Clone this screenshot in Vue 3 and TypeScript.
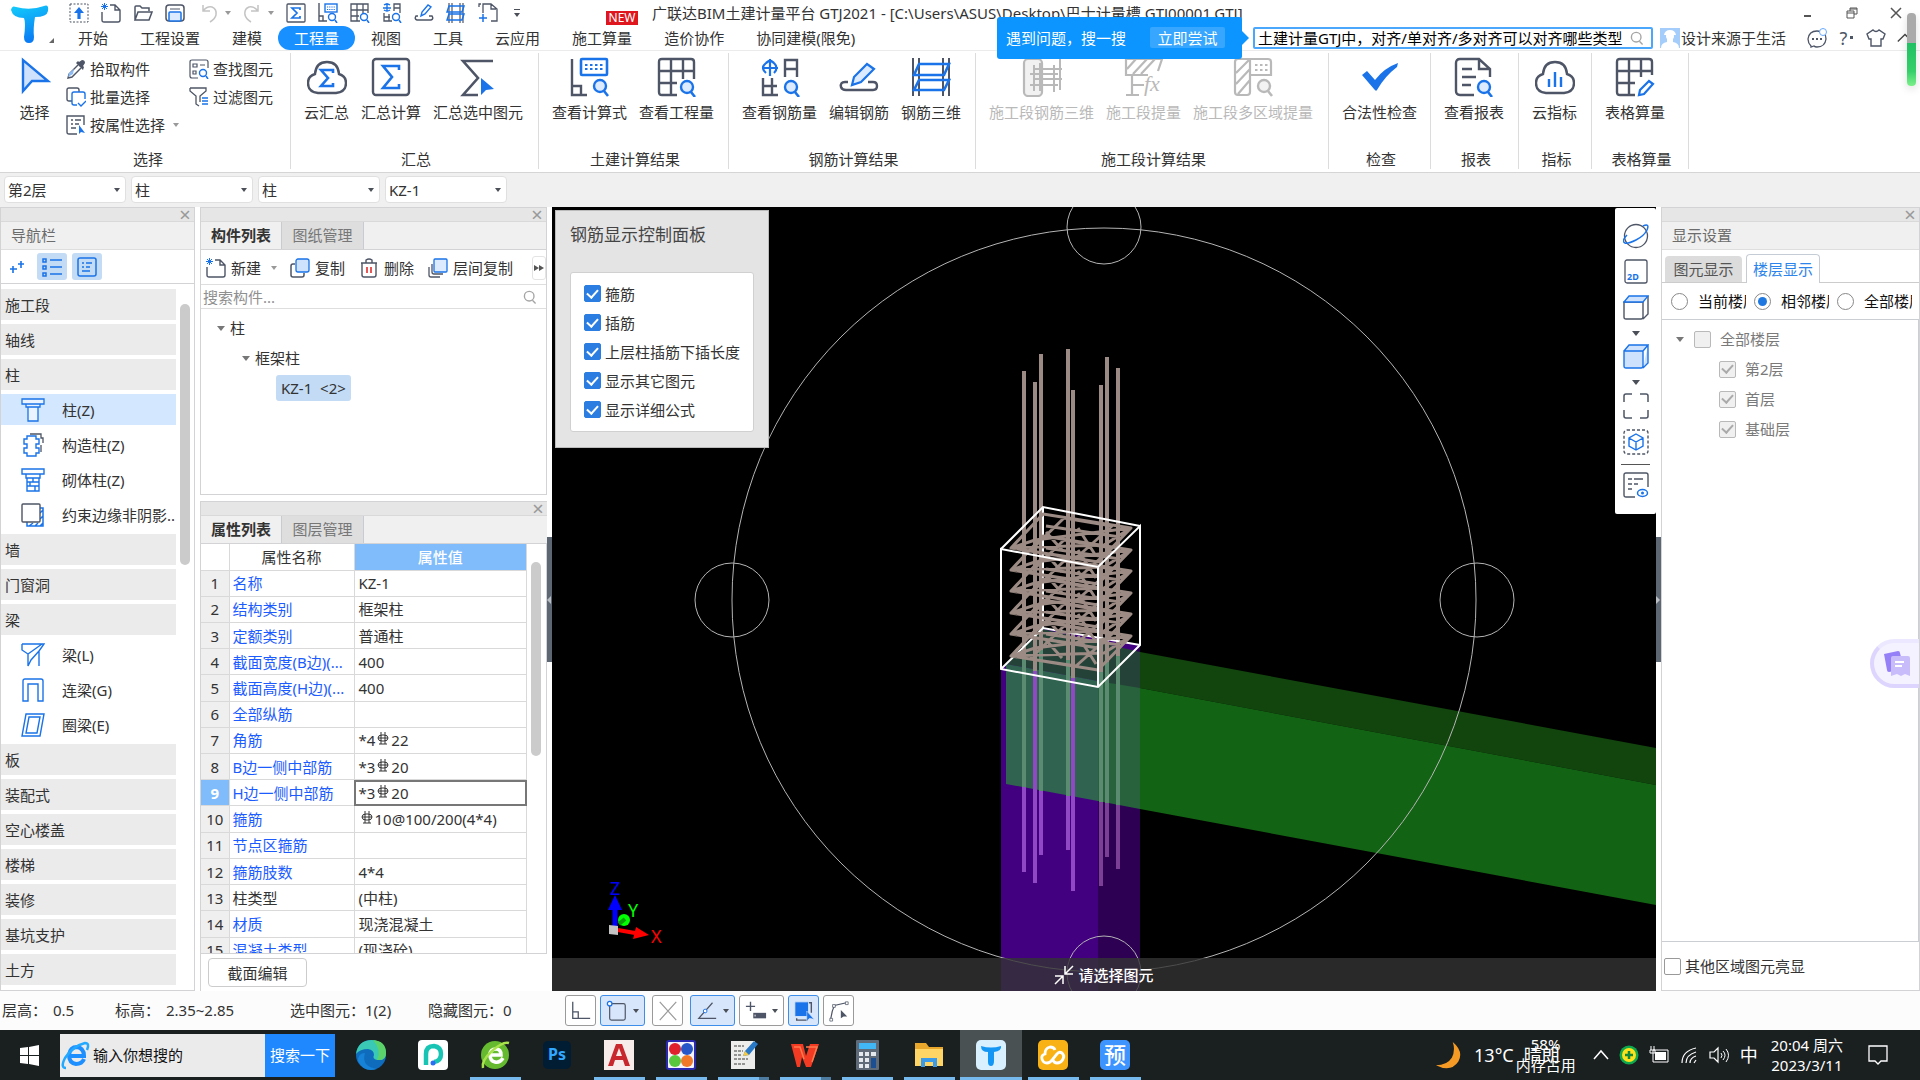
<script setup lang="ts">
import { h, type FunctionalComponent } from 'vue'

const D = '#4d5566'
const B = '#1a73e8'
const G = '#b9b9b9'

const magnifier = (x: number, y: number, c = B, f = '#dcebff') =>
  `<circle cx="${x}" cy="${y}" r="6" fill="${f}" stroke="${c}" stroke-width="2.4"/><path d="M${x + 4} ${y + 5}l4 5" stroke="${c}" stroke-width="2.6"/>`

const art: Record<string, string> = {
  // 20 x 20 glyphs
  upload: `<rect x="1" y="1" width="18" height="18" stroke="${D}" stroke-dasharray="2 1.5"/><path d="M10 4l5 6h-3.400v6H8.400v-6H5z" fill="${B}"/>`,
  newfile: `<path d="M9 2h5l5 5v10q0 2-2 2H3q-2 0-2-2V9M14 2v5h5" stroke="${D}" stroke-width="1.400"/><path d="M1 1l5 5M6 1L1 6M3.500 0v7M0 3.500h7" stroke="${B}"/>`,
  open: `<path d="M2 17V4q0-1 1-1h4l2 2h7v3M2 17L5 9h14l-3 8z" stroke="${D}" stroke-width="1.500"/>`,
  save: `<rect x="1" y="2" width="18" height="16" rx="3" stroke="${D}" stroke-width="1.500"/><path d="M5 6h10" stroke="${D}"/><rect x="4" y="9" width="12" height="9" rx="1" fill="#dcebff" stroke="${B}" stroke-width="1.500"/>`,
  undo: `<path d="M4 2v6h7M4 8q4-5 9-4 5 2 4 8-1 4-6 7" stroke="#c4c4c4" stroke-width="1.500"/>`,
  redo: `<path d="M16 2v6H9M16 8q-4-5-9-4-5 2-4 8 1 4 6 7" stroke="#c4c4c4" stroke-width="1.500"/>`,
  sigmaS: `<rect x="1" y="1" width="18" height="18" rx="1" stroke="${D}" stroke-width="1.300"/><path d="M14 7V5H6l5 5-5 5h8v-2" stroke="${B}" stroke-width="1.700"/>`,
  formulaS: `<path d="M1 0v18h8M1 13h4v5" stroke="${D}" stroke-width="1.400"/><rect x="7" y="1" width="12" height="8" stroke="${B}" stroke-width="1.400"/><path d="M9 4h8M9 6.500h8" stroke="${B}" stroke-dasharray="1.200 1"/><circle cx="14" cy="14" r="3.500" stroke="${B}" stroke-width="1.400"/><path d="M17 17l2 3" stroke="${B}" stroke-width="1.500"/>`,
  gridS: `<path d="M10 18H1V1h17v9M1 7h17M1 13h8M7 1v17M13 1v9" stroke="${D}" stroke-width="1.300"/><circle cx="14" cy="14" r="3.500" stroke="${B}" stroke-width="1.400"/><path d="M17 17l2 3" stroke="${B}" stroke-width="1.500"/>`,
  rebarS: `<path d="M2 10v8h8M2 14h6M12 8V1h6v9M12 5h6M7 11v7" stroke="${D}" stroke-width="1.300"/><path d="M1 5h8M5 0v8M2 2q3-2 6 0M2 7q3 2 6 0" stroke="${B}" stroke-width="1.400"/><circle cx="14" cy="14" r="3.500" stroke="${B}" stroke-width="1.400"/><path d="M17 17l2 3" stroke="${B}" stroke-width="1.500"/>`,
  penS: `<path d="M4 13H2q-2 3 1 4h14q3-1 1-4h-3" stroke="${D}" stroke-width="1.400"/><path d="M7 13l1-4 6-7 3 2-6 7z" stroke="${B}" stroke-width="1.400"/>`,
  ladderS: `<path d="M3 0v20M17 0v20M6 0v20M14 0v20" stroke="${D}" stroke-width="1.200"/><path d="M3 3h15l-2 6H1zM3 11h15l-2 6H1z" stroke="${B}" stroke-width="1.500"/>`,
  addfile: `<path d="M5 10V1h8l6 5v12h-6M1 4V1h2M13 1v5h5" stroke="${D}" stroke-width="1.300"/><path d="M5 11v8M1 15h8" stroke="${B}" stroke-width="1.500"/>`,
  dropper: `<path d="M12 6L3 15l-1 4 4-1 9-9" stroke="${D}" stroke-width="1.400"/><path d="M2 18l1-4 5-4-1 5z" fill="#8dbbf5"/><path d="M10 4l7 7 1-3-1-1 2-3q0-3-3-3l-3 2-1-1z" fill="${D}"/>`,
  batch: `<path d="M6 14H3q-2 0-2-2V3q0-2 2-2h8q2 0 2 2v2" stroke="${D}" stroke-width="1.400"/><path d="M11 18H8q-2 0-2-2V7q0-2 2-2h9q2 0 2 2v5M12 16l3 3 5-5" stroke="${B}" stroke-width="1.400"/>`,
  byprop: `<path d="M11 19H3q-2 0-2-2V1h17v9M5 5h2M9 5h6M5 9h2M9 9h4M5 13h5" stroke="${D}" stroke-width="1.400"/><path d="M13 10v9l2-2 4 1z" fill="${B}"/>`,
  find: `<path d="M9 19H3q-2 0-2-2V3q0-2 2-2h14q2 0 2 2v6M4 5h4v3H4zM11 6h5M4 12h3v3H4z" stroke="${D}" stroke-width="1.200"/><circle cx="14" cy="14" r="3.500" stroke="${B}" stroke-width="1.400"/><path d="M17 17l2 3" stroke="${B}" stroke-width="1.500"/>`,
  filter: `<path d="M1 1h16v3l-6 5v6M1 1v3l6 5v8l3 2" stroke="${D}" stroke-width="1.300"/><path d="M13 11h6M13 14h6M13 17h6" stroke="${B}" stroke-width="1.500"/>`,
  copy: `<path d="M5 6H3q-2 0-2 2v9q0 2 2 2h9q2 0 2-2v-2" stroke="${D}" stroke-width="1.500"/><rect x="6" y="1" width="13" height="13" rx="2" fill="#cfe2fd" stroke="${B}" stroke-width="1.300"/>`,
  trash: `<path d="M2 5h16M7 5V2q3-2 6 0v3M3 5v12q0 2 2 2h10q2 0 2-2V5" stroke="${D}" stroke-width="1.400"/><path d="M8 9v6M12 9v6" stroke="#e02020" stroke-width="1.500"/>`,
  floorcopy: `<path d="M4 6v8q0 2 2 2h9M1 9v8q0 2 2 2h9" stroke="${D}" stroke-width="1.300"/><rect x="6" y="1" width="13" height="13" rx="1" fill="#dcebff" stroke="${B}" stroke-width="1.300"/>`,
  listA: `<path d="M1 2h3v3H1zM1 9h3v3H1zM1 16h3v3H1zM8 3h12M8 10h12M8 17h12" stroke="${B}" stroke-width="1.500"/>`,
  listB: `<rect x="1" y="1" width="18" height="18" rx="2" stroke="${B}" stroke-width="1.500"/><path d="M5 6h2M9 6h6M5 10h2M9 10h4M5 14h8" stroke="${B}" stroke-width="1.400"/>`,
  plus2: `<path d="M6 9v7M3 12h7M14 4v7M11 7h6" stroke="${B}" stroke-width="1.600"/>`,
  // navigation glyphs, 24 x 24
  nCol: `<path d="M1 1h22v5H1zM5 6h14v3H5zM7 9h10v14H7z" fill="#eaf3ff" stroke="${B}" stroke-width="1.300"/>`,
  nStruct: `<path d="M9 1h11v4h2v5M20 12v7" stroke="${D}" stroke-width="1.300"/><path d="M6 3h9v3h3v5h-3v4h3v5h-3v3H6v-3H3v-5h3v-4H3V6h3z" fill="#fff" stroke="${B}" stroke-width="1.400"/>`,
  nBrick: `<path d="M1 1h22v5H1zM5 6h14v4H5zM6 10h12v13H6zM6 14h12M6 18h12M12 10v4M9 14v4M14 18v5" stroke="${B}" stroke-width="1.400"/>`,
  nEdge: `<path d="M19 5h3v18H6v-4M8 23l4-3M14 23l3-3M19 23l3-3M19 16l3-3M19 10l3-3" stroke="${B}" stroke-width="1.500"/><rect x="1" y="1" width="18" height="18" rx="1" fill="#fff" stroke="${D}" stroke-width="1.400"/>`,
  nBeam: `<path d="M1 1h22l-5 7v15M1 1v6l6 4v12l3-6 8-9M7 11L21 1" stroke="${B}" stroke-width="1.400"/>`,
  nLink: `<path d="M2 23V3q0-2 2-2h16q2 0 2 2v20h-5V6H7v17z" stroke="${B}" stroke-width="1.400"/>`,
  nRing: `<path d="M5 1h18l-4 22H1zM8 4h11l-3 16H5z" stroke="${B}" stroke-width="1.400"/>`,
  // view tool glyphs, 26 x 26
  orbit: `<circle cx="13" cy="13" r="11.500" stroke="${D}" stroke-width="1.300"/><path d="M20 3q7-3 4 4-3 6-11 10-8 4-11 3-4-2 2-8" stroke="${B}" stroke-width="1.500"/>`,
  twod: `<rect x="2" y="1" width="22" height="23" rx="2" stroke="${D}" stroke-width="1.300"/><text x="4" y="21" font-size="9" font-weight="700" font-family="Noto Sans, sans-serif" fill="${B}">2D</text>`,
  cube: `<path d="M1 7h19v15q0 2-2 2H3q-2 0-2-2zM20 24l5-5V1" stroke="${D}" stroke-width="1.400"/><path d="M1 7l5-6h19l-5 6z" fill="#cfe2fd" stroke="${B}" stroke-width="1.300"/>`,
  cubeBlue: `<path d="M1 7h19v15q0 2-2 2H3q-2 0-2-2zM1 7l5-6h19l-5 6M20 24l5-5V1" fill="#cfe2fd" stroke="${B}" stroke-width="1.400"/>`,
  corners: `<path d="M1 9V3q0-2 2-2h6M17 1h6q2 0 2 2v6M25 17v6q0 2-2 2h-6M9 25H3q-2 0-2-2v-6" stroke="${D}" stroke-width="1.500"/>`,
  dashcube: `<rect x="1" y="1" width="24" height="24" rx="3" stroke="${D}" stroke-width="1.400" stroke-dasharray="3 2"/><path d="M13 5l7 4v8l-7 4-7-4V9zM6 9l7 4 7-4M13 13v8" stroke="${B}" stroke-width="1.400"/>`,
  listeye: `<path d="M12 25H3q-2 0-2-2V3q0-2 2-2h20q2 0 2 2v12M5 7h4M11 7h9M5 12h4M11 12h4M5 17h4" stroke="${D}" stroke-width="1.400"/><ellipse cx="19.500" cy="21" rx="5" ry="3.500" stroke="${B}" stroke-width="1.500"/><circle cx="19.500" cy="21" r="1.500" fill="${B}"/>`,
  // ribbon glyphs, 40 x 40
  arrow: `<path d="M8 3v31l9-10h16z" fill="#cfe2fd" stroke="${B}" stroke-width="2.400"/>`,
  cloudSum: `<path d="M11 36q-10-1-10-10 0-7 7-9 1-12 12-12t12 12q7 2 7 9 0 9-10 10z" stroke="${D}" stroke-width="2.400"/><path d="M26 16v-3H14l7 8-7 8h12v-3" stroke="${B}" stroke-width="2.600"/>`,
  sum: `<rect x="2" y="2" width="36" height="36" rx="3" stroke="${D}" stroke-width="2.400"/><path d="M28 13V9H12l9 11-9 11h16v-4" stroke="${B}" stroke-width="2.600"/>`,
  sumSel: `<path d="M35 4H5l15 17L5 38h15" stroke="${D}" stroke-width="2.600"/><path d="M23 21v17l5-5 8-1z" fill="${B}"/>`,
  formula: `<path d="M2 2v36h15M2 29h9v9" stroke="${D}" stroke-width="2.400"/><rect x="11" y="2" width="26" height="16" rx="1" stroke="${B}" stroke-width="2.600"/><path d="M15 8h19M15 12h19" stroke="${B}" stroke-width="2" stroke-dasharray="2.500 2.500"/>${magnifier(30, 29)}`,
  grid: `<path d="M20 38H5q-3 0-3-3V5q0-3 3-3h29q3 0 3 3v17M2 14h35M2 26h18M14 2v36M26 2v20" stroke="${D}" stroke-width="2.400"/>${magnifier(30, 30)}`,
  rebar: `<path d="M3 21v17h15M3 29h14M12 21v17M25 20V3h12v17M25 12h12" stroke="${D}" stroke-width="2.400"/><path d="M2 11h16M10 2v17M6 6q-6 5 0 10M14 6q5 5 0 10M6 6l4-3 4 3" stroke="${B}" stroke-width="2.200"/>${magnifier(31, 30)}`,
  pen: `<path d="M9 25H6q-5 0-4 5 1 3 5 3h27q4 0 4-4 0-4-4-4h-5" stroke="${D}" stroke-width="2.400"/><path d="M13 28l2-8L28 7l7 5-13 13z" fill="#dcebff" stroke="${B}" stroke-width="2.200"/>`,
  ladder: `<path d="M2 1v38M8 1v38M32 1v38M38 1v38" stroke="${D}" stroke-width="2"/><path d="M8 7h30l-5 11H3zM8 23h30l-5 10H3z" stroke="${B}" stroke-width="2.600"/>`,
  segLadder: `<rect x="2" y="2" width="18" height="37" rx="4" fill="#f1f1f1" stroke="${G}" stroke-width="2.200"/><path d="M12 8v26M18 6v28M38 1v32M32 8v27M12 12h28M8 17h28M12 22h28M8 28h28" stroke="${G}" stroke-width="2"/>`,
  segFx: `<path d="M2 2h36l-4 12M2 2v16h22M3 12L12 2M9 17L23 2M17 17L31 2M8 18v20M8 28h12M2 38h13" stroke="${G}" stroke-width="2.200"/><text x="20" y="34" font-size="22" font-style="italic" font-family="Liberation Serif, serif" fill="${G}">fx</text>`,
  segGrid: `<path d="M17 2v33q0 3-3 3H5q-3 0-3-3V5q0-3 3-3h30q3 0 3 3v13H17M3 16L16 3M3 27L17 12M5 37L17 23" stroke="${G}" stroke-width="2.200"/><path d="M22 8h14M22 13h14" stroke="${G}" stroke-width="2" stroke-dasharray="2.500 2.500"/>${magnifier(31, 29, G, '#f3f3f3')}`,
  check: `<path d="M2 18l5-4 8 9Q24 11 38 6l-1 4Q25 19 17 33q-1 2-3-1z" fill="${B}"/>`,
  report: `<path d="M20 38H6q-4 0-4-4V6q0-4 4-4h19l11 10v8M25 2v10h11M8 12h10M8 20h14M8 28h9" stroke="${D}" stroke-width="2.400"/>${magnifier(30, 30)}`,
  cloudBar: `<path d="M11 36q-10-1-10-10 0-7 7-9 1-12 12-12t12 12q7 2 7 9 0 9-10 10z" stroke="${D}" stroke-width="2.400"/><path d="M14 22v8M20 15v15M26 20v10" stroke="${B}" stroke-width="2.400"/>`,
  gridPen: `<path d="M20 38H5q-3 0-3-3V5q0-3 3-3h29q3 0 3 3v13M2 14h35M2 26h18M14 2v36M26 2v18" stroke="${D}" stroke-width="2.400"/><path d="M24 38l1-5 9-9 4 3-9 10z" stroke="${B}" stroke-width="2.200"/>`,
  // header extras
  chat: `<path d="M4 18q-3-3-3-7 1-8 9-8 9 0 9 8-1 8-9 8-2 0-3-1l-3 1z" stroke="${D}" stroke-width="1.300"/><path d="M5 11h2M9 11h2M13 11h2" stroke="${D}" stroke-width="1.800"/><circle cx="16" cy="4" r="3.500" fill="#fff" stroke="#68a8ff"/>`,
  shirt: `<path d="M7 2q3 3 6 0l6 4-2 5h-2v7H5v-7H3L1 6z" stroke="${D}" stroke-width="1.400"/>`,
  up: `<path d="M2 14l8-8 8 8" stroke="#444" stroke-width="1.500"/>`,
  avatar: `<path d="M0 0h20v20H0z" fill="#a4cdfc"/><path d="M1 20q0-5 6-6V9h6v5q6 1 6 6z" fill="#fff"/><circle cx="10" cy="8" r="4" fill="#fff"/><path d="M4 7q1-5 6-5t6 5z" fill="#fff"/>`,
  lens: `<circle cx="9" cy="9" r="6" stroke="#a5a5a5" stroke-width="1.700"/><path d="M13 14l4 4" stroke="#a5a5a5" stroke-width="1.700"/>`,
  // status bar, 24 x 24
  sPerp: `<path d="M3 2v18h19M3 13h6v7" stroke="${D}" stroke-width="1.400"/>`,
  sRect: `<rect x="4" y="4" width="17" height="18" rx="2" stroke="${D}" stroke-width="1.300"/><circle cx="4" cy="4" r="2.500" fill="#fff" stroke="${B}" stroke-width="1.400"/>`,
  sX: `<path d="M3 2l18 20M21 2L3 22" stroke="#9a9a9a" stroke-width="1.300"/>`,
  sAngle: `<path d="M18 3L3 20h19" stroke="${D}" stroke-width="1.300"/><circle cx="10" cy="12" r="2" fill="#fff" stroke="${B}"/>`,
  sInput: `<path d="M6 2v10M1 7h10" stroke="${D}" stroke-width="1.500"/><path d="M9 14h14v6H9z" fill="${D}"/><path d="M11 16v2" stroke="#fff"/>`,
  sFill: `<path d="M6 22h10M20 14V3h-3M4 20v2h2" stroke="${D}" stroke-width="1.500"/><rect x="2" y="2" width="15" height="16" rx="1" fill="${B}" stroke="#d7e6fb"/><path d="M15 12v11l3-3 5 1z" fill="${B}" stroke="#d7e6fb" stroke-width=".6"/>`,
  sPoly: `<path d="M3 21Q4 12 7 6l13-3" stroke="${D}" stroke-width="1.300"/><path d="M2 20h3v3H2zM5 5h3v3H5zM19 2h3v3h-3z" fill="#fff" stroke="${D}" stroke-width=".8"/><path d="M14 11v9l3-2 4 0z" fill="${D}"/>`,
  // taskbar, 32 x 32
  win: `<path d="M6 9l8-1v8H6zM15 8l10-2v10H15zM6 17h8v8l-8-1zM15 17h10v10l-10-2z" fill="#fff"/>`,
  ie: `<path d="M24 20q-2 5-8 5-7-1-7-9 1-8 8-8 7 1 7 9H10" stroke="#1e8fff" stroke-width="4"/><path d="M6 29Q0 29 5 19 13 7 25 4q5 0 2 7" stroke="#23a9ff" stroke-width="2.500"/>`,
  edge: `<circle cx="16" cy="16" r="15" fill="#0f6cbd"/><path d="M1 15Q3 1 17 1q13 1 14 13 0 8-9 7-5-1-3-5 0-5-6-6-8 0-12 5z" fill="#39c9b4"/><path d="M18 1q13 1 13 13 0 8-9 7 5-10-4-20z" fill="#5bd36a"/><path d="M10 14q-4 14 12 16-13 4-19-8 0-8 7-8z" fill="#1683d8"/>`,
  pico: `<rect x="1" y="1" width="30" height="30" rx="4" fill="#fff"/><path d="M9 26V15q0-8 8-8 7 1 7 8 0 7-7 8" stroke="#18c5b5" stroke-width="4.500"/><circle cx="16" cy="24" r="2.500" fill="#2d6df6"/>`,
  egreen: `<circle cx="16" cy="16" r="14" fill="#65ba2f"/><path d="M24 19q-3 5-8 4-5-1-5-7 0-6 6-6 5 0 5 6H11" stroke="#fff" stroke-width="3.500"/><path d="M4 29Q2 22 13 12 24 2 30 4" stroke="#a9e34b" stroke-width="2.500"/>`,
  ps: `<rect x="2" y="2" width="28" height="28" rx="5" fill="#001d34"/><text x="7" y="21" font-size="16" font-weight="700" font-family="Noto Sans, sans-serif" fill="#31a8ff">Ps</text>`,
  acad: `<path d="M1 1h30v30H1z" fill="#f7ece9"/><path d="M5 27L13 5h6l8 22h-5l-2-6h-8l-2 6zM13 17h6l-3-8z" fill="#c8282d"/>`,
  balls: `<rect x="2" y="2" width="28" height="28" rx="2" fill="#f4f4ff" stroke="#2a2ab0" stroke-width="2"/><circle cx="10" cy="10" r="6" fill="#e0202c"/><circle cx="22" cy="10" r="6" fill="#2656c8"/><circle cx="10" cy="22" r="6" fill="#5ac83c"/><circle cx="22" cy="22" r="6" fill="#f07828"/>`,
  note: `<path d="M4 2h24v28H4z" fill="#ededeb"/><path d="M7 7h10M7 12h9M7 16h8M7 20h14M7 25h11" stroke="#777" stroke-width="1.500" stroke-dasharray="3 1"/><path d="M16 17l2-5L27 2l4 3-9 11z" fill="#2878c8"/><path d="M16 17l2-5 4 4z" fill="#f6c945"/>`,
  wps: `<path d="M2 5h12l3 12 4-12h9l-8 23h-5l-4-10-2 10H8z" fill="#f23b22"/><path d="M5 8h6l4 12M17 8h11l-5 15" stroke="#ff7a4d" stroke-width="1.500"/>`,
  calc: `<rect x="5" y="1" width="23" height="30" rx="1" fill="#5f6b78"/><path d="M8 4h17v6H8z" fill="#42b7f5"/><path d="M8 13h4v4H8zM14 13h4v4h-4zM20 13h5v4h-5zM8 19h4v4H8zM14 19h4v4h-4zM8 25h4v4H8zM14 25h4v4h-4z" fill="#e4e9ee"/><path d="M20 19h5v10h-5z" fill="#1b4f91"/>`,
  folder: `<path d="M2 4h11l3 4h14v19H2z" fill="#e9a72c"/><path d="M2 10h28v17H2z" fill="#ffd665"/><path d="M8 28v-9h16v9h-4v-5h-8v5z" fill="#3b9be8"/>`,
  glodon: `<rect x="1" y="1" width="30" height="30" rx="5" fill="#d9f0ff"/><path d="M6 7q10 3 20 0 1 5-7 6v9q0 5-3 5t-3-4V13q-7 0-7-6z" fill="#1496f5"/>`,
  cloudY: `<rect x="1" y="1" width="30" height="30" rx="5" fill="#f9b215"/><path d="M18 11q-1-3-5-3-5 1-5 7-4 1-3 5 1 4 5 4 3 0 5-3l5-6q2-3 5-1 3 3 1 6-2 4-6 4-3 0-4-3" stroke="#fff" stroke-width="2.800"/>`,
  yu: `<rect x="1" y="1" width="30" height="30" rx="5" fill="#3d94ff"/><text x="5" y="24" font-size="22" font-weight="500" font-family="Noto Sans CJK SC, sans-serif" fill="#fff">预</text>`,
  moon: `<path d="M20 2q12 10 6 21-8 12-24 4 12 0 17-8 4-8 1-17z" fill="#f59b25"/>`,
  safe: `<circle cx="10" cy="10" r="9.500" fill="#10a84c"/><circle cx="10" cy="10" r="7" fill="#ffe11b"/><path d="M10 6v8M6 10h8" stroke="#10893e" stroke-width="2.500"/>`,
  battery: `<path d="M6 7h11v8H6z" fill="#fff"/><path d="M4 5h15v12H4zM2 1v4M5 1v4M1 5h5v3H1z" stroke="#fff"/>`,
  wifi: `<path d="M3 18Q3 6 17 3M7 18q0-8 10-11M11 18q0-5 6-7M15 18l2-3" stroke="#fff" stroke-width="1.200"/>`,
  volume: `<path d="M1 7h4l4-4v14l-4-4H1z" stroke="#fff" stroke-width="1.200"/><path d="M12 8q2 2 0 5M14 6q4 4 0 9M17 4q5 6 0 13" stroke="#fff"/>`,
  bell: `<path d="M1 1h18v15h-6l-3 3-3-3H1z" stroke="#fff" stroke-width="1.300"/>`,
  converge: `<path d="M11 1v8h8M19 1l-8 8M9 19v-8H1M1 19l8-8" stroke="#fff" stroke-width="1.500"/>`,
}

const Ico: FunctionalComponent<{ name: string; box?: number; size?: number }> = (p) =>
  h('svg', {
    class: 'ico',
    viewBox: `0 0 ${p.box ?? 20} ${p.box ?? 20}`,
    width: p.size ?? p.box ?? 20,
    height: p.size ?? p.box ?? 20,
    fill: 'none',
    'aria-hidden': 'true',
    innerHTML: art[p.name],
  })
Ico.props = ['name', 'box', 'size']

const quickA = ['upload', 'newfile', 'open', 'save']
const quickB = ['sigmaS', 'formulaS', 'gridS', 'rebarS', 'penS', 'ladderS', 'addfile']
const menus = ['开始', '工程设置', '建模', '工程量', '视图', '工具', '云应用', '施工算量', '造价协作', '协同建模(限免)']

interface Group { title: string; width: number; off?: boolean; items: [string, string][] }
const groups: Group[] = [
  { title: '汇总', width: 248, items: [['cloudSum', '云汇总'], ['sum', '汇总计算'], ['sumSel', '汇总选中图元']] },
  { title: '土建计算结果', width: 190, items: [['formula', '查看计算式'], ['grid', '查看工程量']] },
  { title: '钢筋计算结果', width: 247, items: [['rebar', '查看钢筋量'], ['pen', '编辑钢筋'], ['ladder', '钢筋三维']] },
  { title: '施工段计算结果', width: 353, off: true, items: [['segLadder', '施工段钢筋三维'], ['segFx', '施工段提量'], ['segGrid', '施工段多区域提量']] },
  { title: '检查', width: 102, items: [['check', '合法性检查']] },
  { title: '报表', width: 88, items: [['report', '查看报表']] },
  { title: '指标', width: 73, items: [['cloudBar', '云指标']] },
  { title: '表格算量', width: 97, items: [['gridPen', '表格算量']] },
]
const combos = [['楼层', '第2层'], ['构件大类', '柱'], ['构件类型', '柱'], ['构件', 'KZ-1']]

interface NavItem { text: string; icon?: string; on?: boolean }
const nav: NavItem[] = [
  { text: '施工段' }, { text: '轴线' }, { text: '柱' },
  { text: '柱(Z)', icon: 'nCol', on: true }, { text: '构造柱(Z)', icon: 'nStruct' },
  { text: '砌体柱(Z)', icon: 'nBrick' }, { text: '约束边缘非阴影..', icon: 'nEdge' },
  { text: '墙' }, { text: '门窗洞' }, { text: '梁' },
  { text: '梁(L)', icon: 'nBeam' }, { text: '连梁(G)', icon: 'nLink' }, { text: '圈梁(E)', icon: 'nRing' },
  { text: '板' }, { text: '装配式' }, { text: '空心楼盖' }, { text: '楼梯' },
  { text: '装修' }, { text: '基坑支护' }, { text: '土方' },
]

// name, text before the bar-grade mark, text after it (null: no mark)
const props: [string, string, string | null][] = [
  ['名称', 'KZ-1', null], ['结构类别', '框架柱', null], ['定额类别', '普通柱', null],
  ['截面宽度(B边)(...', '400', null], ['截面高度(H边)(...', '400', null], ['全部纵筋', '', null],
  ['角筋', '*4', '22'], ['B边一侧中部筋', '*3', '20'], ['H边一侧中部筋', '*3', '20'],
  ['箍筋', '', '10@100/200(4*4)'], ['节点区箍筋', '', null], ['箍筋肢数', '4*4', null],
  ['柱类型', '(中柱)', null], ['材质', '现浇混凝土', null], ['混凝土类型', '(现浇砼)', null],
]

const showOptions = ['箍筋', '插筋', '上层柱插筋下插长度', '显示其它图元', '显示详细公式']
const floors = ['第2层', '首层', '基础层']

// vertical bars: x, top, end inside the column, bottom end, front row
const bars = [
  [1024, 371, 655, 872, 0], [1035, 382, 671, 883, 1], [1041, 354, 650, 855, 0], [1068, 349, 660, 850, 0],
  [1073, 390, 678, 891, 1], [1101, 385, 672, 886, 0], [1107, 357, 662, 857, 0], [1118, 368, 656, 869, 0],
]
const ties = [0, 1, 2, 3, 4, 5].map((i) => {
  const y = 548 + Math.round(i * 21.5)
  return [
    `M1011 ${y}L1043 ${y - 34}L1131 ${y - 20}L1098 ${y + 14}Z`,
    `M1011 ${y}L1035 ${y - 8}L1131 ${y - 20}L1104 ${y - 3}Z`,
    `M1030 ${y + 3}L1064 ${y - 30}L1112 ${y - 22}L1076 ${y + 10}Z`,
    `M1046 ${y - 22}L1120 ${y - 11}M1046 ${y - 16}L1062 ${y + 2}M1078 ${y - 20}L1096 ${y + 8}`,
  ].join('')
})
const rings = [[732, 600], [1477, 600], [1104, 227], [1104, 973]]

const statusTools = [
  { icon: 'sPerp' }, { icon: 'sRect', on: true, more: true }, { icon: 'sX', apart: true },
  { icon: 'sAngle', on: true, more: true, apart: true }, { icon: 'sInput', more: true },
  { icon: 'sFill', on: true }, { icon: 'sPoly' },
]
const apps = [
  { icon: 'edge', name: 'Edge' }, { icon: 'pico', name: 'P' }, { icon: 'egreen', name: '360', run: true },
  { icon: 'ps', name: 'Photoshop' }, { icon: 'acad', name: 'AutoCAD', run: true }, { icon: 'balls', name: 'Media', run: true },
  { icon: 'note', name: 'Notes', run: true, stack: true }, { icon: 'wps', name: 'WPS', run: true, stack: true },
  { icon: 'calc', name: 'Calculator', run: true }, { icon: 'folder', name: 'Explorer', run: true },
  { icon: 'glodon', name: 'GTJ', run: true, cur: true }, { icon: 'cloudY', name: 'Cloud', run: true }, { icon: 'yu', name: 'Budget', run: true },
]
</script>

<template>
  <div class="app">
    <header class="head">
      <button class="logo" aria-label="应用菜单">
        <svg viewBox="0 0 40 40" width="40" height="40" aria-hidden="true">
          <defs><linearGradient id="lg" x1="0" y1="0" x2="0.300" y2="1"><stop offset="0" stop-color="#13cdfb" /><stop offset="1" stop-color="#0a7cf4" /></linearGradient></defs>
          <path d="M1 6q1-5 5-3 14 4 28-1 5-2 4 5-1 6-13 6-2 12-1 20 0 6-5 6t-5-6q2-14 0-19-11 0-13-8z" fill="url(#lg)" />
        </svg>
        <i class="corner"></i>
      </button>
      <div class="headmain">
        <div class="row1">
          <div class="quick"><button v-for="q in quickA" :key="q" :aria-label="q"><Ico :name="q" /></button></div>
          <div class="hist">
            <button aria-label="撤销"><Ico name="undo" /></button><i class="caret pale"></i>
            <button class="redo" aria-label="恢复"><Ico name="redo" /></button><i class="caret pale"></i>
          </div>
          <div class="quick"><button v-for="q in quickB" :key="q" :aria-label="q"><Ico :name="q" /></button></div>
          <button class="more" aria-label="自定义"><i class="bar"></i><i class="caret"></i></button>
          <span class="new">NEW</span>
          <span class="title">广联达BIM土建计量平台 GTJ2021 - [C:\Users\ASUS\Desktop\巴士计量槽.GTJ00001.GTJ]</span>
          <div class="wins">
            <button aria-label="最小化"><svg width="12" height="12" fill="none"><path d="M2 9h7" stroke="#555" stroke-width="2" /></svg></button>
            <button aria-label="还原"><svg width="12" height="12" fill="none"><path d="M1 4h7v7H1zM4 4V1h7v6H8M1 6h7M4 2h7" stroke="#555" /></svg></button>
            <button aria-label="关闭"><svg width="12" height="12" fill="none"><path d="M1 1l10 10M11 1L1 11" stroke="#555" stroke-width="1.500" /></svg></button>
          </div>
        </div>
        <div class="row2">
          <nav class="menus"><button v-for="m in menus" :key="m" :class="{ on: m === '工程量' }">{{ m }}</button></nav>
          <div class="user">
            <div class="search">
              <input type="text" aria-label="搜索" value="土建计量GTJ中，对齐/单对齐/多对齐可以对齐哪些类型" />
              <Ico name="lens" :size="16" />
              <div class="tip"><span>遇到问题，搜一搜</span><button>立即尝试</button></div>
            </div>
            <Ico name="avatar" />
            <span>设计来源于生活</span>
            <div class="extras">
              <button aria-label="消息"><Ico name="chat" /></button>
              <button class="help" aria-label="帮助">?<i class="dot"></i></button>
              <button aria-label="皮肤"><Ico name="shirt" /></button>
              <button aria-label="收起"><Ico name="up" :size="18" /></button>
            </div>
          </div>
        </div>
      </div>
      <div class="gauge"></div>
    </header>

    <section class="ribbon">
      <div class="group pick">
        <div class="tools">
          <button class="big sel"><Ico name="arrow" :box="40" /><span>选择</span></button>
          <div class="smalls">
            <button><Ico name="dropper" />拾取构件</button>
            <button><Ico name="batch" />批量选择</button>
            <button><Ico name="byprop" />按属性选择<i class="caret pale"></i></button>
          </div>
          <div class="smalls">
            <button><Ico name="find" />查找图元</button>
            <button><Ico name="filter" />过滤图元</button>
          </div>
        </div>
        <div class="gtitle">选择</div>
      </div>
      <div v-for="g in groups" :key="g.title" class="group" :class="{ off: g.off }" :style="{ width: g.width + 'px' }">
        <div class="tools">
          <button v-for="it in g.items" :key="it[1]" class="big" :disabled="g.off"><Ico :name="it[0]" :box="40" /><span>{{ it[1] }}</span></button>
        </div>
        <div class="gtitle">{{ g.title }}</div>
      </div>
    </section>

    <section class="combos">
      <div v-for="c in combos" :key="c[0]" class="combo">
        <select :aria-label="c[0]"><option>{{ c[1] }}</option></select><i class="caret"></i>
      </div>
    </section>

    <main class="work">
      <aside class="panel navp">
        <div class="strip"><button aria-label="关闭">×</button></div>
        <h2 class="ptitle">导航栏</h2>
        <div class="navtools">
          <button aria-label="添加"><Ico name="plus2" /></button>
          <button class="on" aria-label="列表"><Ico name="listA" /></button>
          <button class="on" aria-label="详情"><Ico name="listB" /></button>
        </div>
        <div class="navbody">
          <ul>
            <li v-for="n in nav" :key="n.text" :class="{ leaf: n.icon, on: n.on }"><Ico v-if="n.icon" :name="n.icon" :box="24" />{{ n.text }}</li>
          </ul>
          <div class="track"><i class="thumb navthumb"></i></div>
        </div>
      </aside>

      <div class="mid">
        <section class="panel comp">
          <div class="strip"><button aria-label="关闭">×</button></div>
          <div class="tabs"><button class="on">构件列表</button><button>图纸管理</button></div>
          <div class="ctools">
            <button class="c1"><Ico name="newfile" />新建<i class="caret pale"></i></button>
            <button class="c2"><Ico name="copy" />复制</button>
            <button class="c3"><Ico name="trash" />删除</button>
            <button class="c4"><Ico name="floorcopy" />层间复制</button>
            <button class="next" aria-label="更多"><i></i><i></i></button>
          </div>
          <div class="find"><input type="text" aria-label="搜索构件" placeholder="搜索构件..." /><Ico name="lens" :size="16" /></div>
          <div class="tree">
            <div class="t1"><i class="caret"></i>柱</div>
            <div class="t2"><i class="caret"></i>框架柱</div>
            <div class="t3"><span>KZ-1 &nbsp;&lt;2&gt;</span></div>
          </div>
        </section>
        <section class="panel attr">
          <div class="strip"><button aria-label="关闭">×</button></div>
          <div class="tabs"><button class="on">属性列表</button><button>图层管理</button></div>
          <div class="sheet">
            <table>
              <thead><tr><th class="no"></th><th class="nm">属性名称</th><th class="vl">属性值</th></tr></thead>
              <tbody>
                <tr v-for="(p, i) in props" :key="p[0]" :class="{ cur: i === 8, plain: i === 12 }">
                  <th scope="row">{{ i + 1 }}</th>
                  <td class="name">{{ p[0] }}</td>
                  <td class="val">{{ p[1] }}<svg v-if="p[2]" class="grade" width="12" height="14" viewBox="0 0 12 14" fill="none" aria-label="Φ"><path d="M1 6q0-3 4-3h2q4 0 4 3t-4 3H5Q1 9 1 6zM4 0v12M8 0v12M1 6h10M2 12h8" stroke="#333" /></svg>{{ p[2] }}</td>
                </tr>
              </tbody>
            </table>
            <div class="track"><i class="thumb attrthumb"></i></div>
          </div>
          <div class="foot"><button>截面编辑</button></div>
        </section>
      </div>

      <div class="split"><i class="grip left"></i></div>

      <section class="view">
        <svg class="scene" viewBox="552 207 1104 784" preserveAspectRatio="xMidYMid slice" role="img" aria-label="三维视图">
          <path d="M1001 669L1043 628L1140 645V1000H1001z" fill="#420080" />
          <path d="M1098 687L1140 645V1000H1098z" fill="#2d0054" />
          <path d="M1140 652L1656 748V785L1140 688z" fill="#12440d" />
          <path d="M1140 688L1656 785V905L1140 809z" fill="#136314" />
          <path d="M1006 664L1043 629L1140 652V689z" fill="#254238" />
          <path d="M1006 664L1098 681V801L1006 784z" fill="#306350" />
          <path d="M1098 681L1140 688V809L1098 801z" fill="#28623c" />
          <g stroke-width="4">
            <g v-for="b in bars" :key="b[0]">
              <path :d="`M${b[0]} ${b[2]}V${b[3]}`" :stroke="b[0] > 1098 ? '#7b3f95' : '#9148c4'" />
              <path v-if="!b[4]" :d="`M${b[0]} ${b[2]}V${784 + Math.round((b[0] - 1006) * 0.186)}`" stroke="#5b8b70" />
              <path :d="`M${b[0]} ${b[1]}V${b[2]}`" stroke="#9c8b84" />
            </g>
          </g>
          <path d="M1001 549L1043 507L1140 526M1043 507V628M1001 669L1043 628L1140 645" fill="none" stroke="#fff" stroke-width="2" />
          <path v-for="t in ties" :key="t" :d="t" fill="none" stroke="#9c8b84" stroke-width="3" stroke-linejoin="round" />
          <path d="M1001 549L1098 567L1140 526V645L1098 687L1001 669zM1098 567V687" fill="none" stroke="#fff" stroke-width="2" />
          <g fill="none" stroke="#b4b4b4" stroke-width="1">
            <circle cx="1104" cy="600" r="372" />
            <circle v-for="r in rings" :key="r.join()" :cx="r[0]" :cy="r[1]" r="37" />
          </g>
          <path d="M615 926V905" stroke="#00f" stroke-width="5" />
          <path d="M615 895l7 15h-14z" fill="#00f" />
          <circle cx="624" cy="920" r="6" fill="#0f0" /><path d="M619 924l6-5" stroke="#0a9d0a" stroke-width="4" />
          <path d="M618 930l17 3" stroke="#f00" stroke-width="4" /><path d="M649 935l-16 4 3-12z" fill="#f00" />
          <path d="M609 925l9 1v9l-9-1z" fill="#c4c4c4" />
          <g font-family="Noto Sans, sans-serif" font-size="18">
            <text x="610" y="895" fill="#00f">Z</text><text x="628" y="917" fill="#0f0">Y</text><text x="651" y="943" fill="#f00">X</text>
          </g>
        </svg>
        <form class="control">
          <h3>钢筋显示控制面板</h3>
          <div class="opts"><label v-for="o in showOptions" :key="o"><input type="checkbox" checked />{{ o }}</label></div>
        </form>
        <div class="viewtools">
          <button aria-label="动态观察"><Ico name="orbit" :box="26" /></button>
          <button aria-label="二维"><Ico name="twod" :box="26" /></button>
          <button aria-label="线框"><Ico name="cube" :box="26" /></button><i class="caret"></i>
          <button aria-label="实体"><Ico name="cubeBlue" :box="26" /></button><i class="caret"></i>
          <button aria-label="全屏"><Ico name="corners" :box="26" /></button>
          <button aria-label="局部三维"><Ico name="dashcube" :box="26" /></button>
          <hr />
          <button aria-label="显示设置"><Ico name="listeye" :box="26" /></button>
        </div>
        <div class="prompt"><Ico name="converge" :size="20" />请选择图元</div>
      </section>

      <div class="split"><i class="grip right"></i></div>

      <aside class="panel disp">
        <div class="strip"><button aria-label="关闭">×</button></div>
        <h2 class="ptitle">显示设置</h2>
        <div class="dtabs"><button>图元显示</button><button class="on">楼层显示</button></div>
        <div class="radios">
          <label><input type="radio" name="range" /><span>当前楼层</span></label>
          <label><input type="radio" name="range" checked /><span>相邻楼层</span></label>
          <label><input type="radio" name="range" /><span>全部楼层</span></label>
        </div>
        <div class="ftree">
          <div class="frow"><i class="caret"></i><label><input type="checkbox" disabled />全部楼层</label></div>
          <div v-for="f in floors" :key="f" class="frow kid"><label><input type="checkbox" checked disabled />{{ f }}</label></div>
        </div>
        <div class="dfoot"><label><input type="checkbox" />其他区域图元亮显</label></div>
        <button class="float" aria-label="笔记">
          <svg width="30" height="30" fill="none" aria-hidden="true"><path d="M2 5l14-3q2 0 2 2l4 16-15 3q-2 0-2-2z" fill="#9580f8" /><path d="M9 9q0-2 2-2h15q2 0 2 2v18l-5-2-4 2-4-2-6 2z" fill="#c9bcfb" /><path d="M13 13h9M13 17h7" stroke="#fff" stroke-width="2" /></svg>
        </button>
      </aside>
    </main>

    <section class="status">
      <div class="info">
        <span class="i1">层高：<b>0.5</b></span><span class="i2">标高：<b>2.35~2.85</b></span><span class="i3">选中图元：<b>1(2)</b></span><span>隐藏图元：<b>0</b></span>
      </div>
      <div class="stools">
        <button v-for="s in statusTools" :key="s.icon" :class="{ on: s.on, apart: s.apart, wide: s.more }" :aria-label="s.icon"><Ico :name="s.icon" :box="24" :size="22" /><i v-if="s.more" class="caret"></i></button>
      </div>
    </section>

    <footer class="taskbar">
      <button class="start" aria-label="开始"><Ico name="win" :box="32" /></button>
      <div class="tsearch"><Ico name="ie" :box="32" /><input type="text" aria-label="搜索" value="输入你想搜的" /><button>搜索一下</button></div>
      <div class="apps">
        <button v-for="a in apps" :key="a.icon" :class="{ run: a.run, cur: a.cur, stack: a.stack }" :aria-label="a.name"><Ico :name="a.icon" :box="32" /></button>
      </div>
      <div class="tray">
        <div class="weather"><Ico name="moon" :box="32" :size="30" /><span>13°C</span><span class="sky">晴朗<em class="pct">58%</em><em class="mem">内存占用</em></span></div>
        <svg class="chev" width="16" height="16" fill="none" aria-hidden="true"><path d="M1 12l7-8 7 8" stroke="#fff" stroke-width="1.500" /></svg>
        <Ico name="safe" /><Ico name="battery" /><Ico name="wifi" /><Ico name="volume" />
        <span class="ime">中</span>
        <time>20:04 周六<br />2023/3/11</time>
        <Ico name="bell" />
      </div>
    </footer>
  </div>
</template>

<style>
body { margin: 0; }
</style>

<style scoped>
.app { min-height: 100vh; display: flex; flex-direction: column; background: #fff; color: #333; font: 15px/20px "Noto Sans", "Noto Sans CJK SC", sans-serif; overflow: hidden; }
.app * { box-sizing: border-box; }
button, input, select { font: inherit; color: inherit; margin: 0; padding: 0; border: 0; background: none; }
button { display: flex; align-items: center; justify-content: center; white-space: nowrap; }
:deep(.ico) { flex: none; display: block; }
.caret { flex: none; width: 0; height: 0; border: 3px solid transparent; border-top: 4px solid #4a4f58; border-bottom: 0; }
.caret.pale { border-top-color: #999; }

.head { display: flex; position: relative; height: 51px; border-bottom: 1px solid #ebebeb; }
.logo { width: 62px; position: relative; align-items: flex-start; justify-content: flex-start; padding: 4px 0 0 10px; }
.corner { position: absolute; right: 8px; bottom: 7px; border-left: 5px solid transparent; border-bottom: 5px solid #666; }
.headmain { flex: 1; min-width: 0; display: flex; flex-direction: column; }
.row1 { height: 25px; display: flex; align-items: center; padding-left: 7px; }
.quick { display: flex; gap: 12px; }
.hist { display: flex; align-items: center; gap: 6px; margin: 0 12px 0 14px; }
.redo { margin-left: 5px; }
.more { flex-direction: column; gap: 3px; margin-left: 16px; }
.bar { width: 6px; height: 1px; background: #4a4f58; }
.new { margin: 11px 0 0 86px; width: 32px; height: 14px; background: #e0161e; color: #fff; font-size: 12px; line-height: 14px; text-align: center; }
.title { margin-left: 14px; white-space: nowrap; }
.wins { margin: 0 18px 0 auto; display: flex; gap: 32px; }
.row2 { height: 25px; display: flex; align-items: center; }
.menus { display: flex; }
.menus button { height: 24px; padding: 0 16px; border-radius: 12px; }
.menus .on { background: #1890ff; color: #fff; }
.user { margin-left: auto; display: flex; align-items: center; padding-right: 6px; }
.user > span { white-space: nowrap; margin-left: 1px; }
.search { position: relative; width: 400px; height: 22px; margin-right: 7px; border: 2px solid #4aa7fb; border-radius: 2px; display: flex; align-items: center; color: #000; padding-right: 6px; }
.search input { flex: 1; min-width: 0; padding-left: 3px; outline: 0; }
.tip { position: absolute; right: calc(100% + 13px); top: -12px; width: 245px; height: 42px; border-radius: 3px; background: #0c94ff; color: #fff; display: flex; align-items: center; padding: 0 17px 0 9px; justify-content: space-between; white-space: nowrap; }
.tip::after { content: ""; position: absolute; left: 100%; top: 14px; border: 7px solid transparent; border-left-color: #0c94ff; border-right: 0; }
.tip button { width: 75px; height: 21px; border-radius: 2px; background: #36a6ff; }
.extras { display: flex; align-items: center; margin-left: 21px; gap: 10px; }
.help { width: 19px; font-size: 18px; color: #4d5566; }
.dot { width: 3px; height: 3px; background: #4d5566; margin-left: 3px; }
.gauge { position: absolute; right: 4px; top: 13px; width: 9px; height: 73px; border-radius: 4px; background: linear-gradient(#aaa 41%, #21c063 41%, #35cf6a 80%, #7cf08a); box-shadow: 0 3px 8px #0002; z-index: 3; }

.ribbon { display: flex; height: 122px; border-bottom: 1px solid #d5d5d5; padding-top: 2px; }
.group { height: 116px; flex: none; border-right: 1px solid #dcdcdc; display: flex; flex-direction: column; }
.group.pick { width: 291px; }
.tools { height: 96px; display: flex; padding-left: 7px; }
.gtitle { text-align: center; padding-left: 3px; }
.pick .gtitle { padding-left: 6px; }
.big { flex: none; flex-direction: column; justify-content: flex-start; padding: 4px 6px 0; }
.big span { margin-top: 5px; }
.off .big { color: #b9b9b9; }
.big.sel { width: 55px; }
.smalls { flex: none; padding-top: 2px; margin-left: 4px; width: 119px; }
.smalls button { height: 28px; gap: 4px; }
.smalls .caret { margin-left: 4px; }

.combos { display: flex; gap: 5px; height: 34px; padding: 3px 4px; background: #f0f0f0; }
.combo { position: relative; width: 122px; height: 27px; }
.combo select { appearance: none; width: 100%; height: 27px; padding-left: 3px; background: #fff; border: 1px solid #e0e0e0; border-radius: 4px; }
.combo .caret { position: absolute; right: 6px; top: 12px; }

.work { flex: 1; display: flex; background: #fff; }
.panel { border: 1px solid #d3d3d5; background: #fff; display: flex; flex-direction: column; }
.strip { height: 14px; background: #e6e6e6; border-bottom: 1px solid #d9d9d9; display: flex; justify-content: flex-end; }
.strip button { width: 18px; font-size: 20px; line-height: 14px; color: #999; }
.ptitle { margin: 0; height: 28px; padding-left: 10px; font-size: 15px; font-weight: 400; line-height: 26px; background: #f0f0f0; border-bottom: 1px solid #dedede; color: #6c6c6c; }
.track { width: 18px; flex: none; display: flex; justify-content: center; }
.thumb { width: 10px; border-radius: 5px; background: #cbcbcb; }

.navp { width: 195px; flex: none; }
.navtools { height: 34px; border-bottom: 1px solid #d3d3d5; display: flex; align-items: center; gap: 5px; padding-left: 1px; }
.navtools button { width: 30px; height: 27px; border-radius: 3px; }
.navtools .on { background: #c3dbf5; }
.navbody { display: flex; padding-top: 5px; }
.navbody ul { list-style: none; margin: 0; padding: 0; flex: 1; }
.navbody li { height: 31px; margin-bottom: 4px; padding-left: 4px; background: #ebebeb; display: flex; align-items: center; }
.navbody .leaf { background: #fff; padding-left: 20px; gap: 17px; }
.navbody .leaf.on { background: #d3e7fe; }
.navthumb { height: 261px; margin-top: 15px; }

.mid { width: 347px; flex: none; margin-left: 5px; display: flex; flex-direction: column; gap: 6px; }
.tabs { display: flex; height: 28px; background: #f0f0f0; border-bottom: 1px solid #d3d3d5; }
.tabs button { width: 82px; background: #dedede; border-right: 1px solid #c8cbcf; color: #777; padding-bottom: 1px; }
.tabs .on { width: 81px; background: #f0f0f0; color: #333; font-weight: 700; }
.comp { height: 288px; flex: none; }
.ctools { height: 35px; border-bottom: 1px solid #dedede; display: flex; align-items: center; padding: 1px 0 0 5px; }
.ctools button { gap: 5px; }
.ctools .caret { margin-left: 5px; }
.c2 { margin-left: 13px; }
.c3 { margin-left: 14px; }
.c4 { margin-left: 14px; }
.ctools .next { margin-left: auto; width: 14px; height: 24px; gap: 0; border: 1px solid #e4e4e4; border-radius: 3px; }
.next i { border: 3px solid transparent; border-left: 5px solid #555; border-right: 0; }
.find { height: 24px; border-bottom: 1px solid #dedede; display: flex; align-items: center; padding: 0 8px 0 2px; }
.find input { flex: 1; min-width: 0; }
.find input::placeholder { color: #8f8f8f; opacity: 1; }
.tree { padding-top: 4px; }
.tree > div { height: 30px; display: flex; align-items: center; gap: 5px; }
.tree .caret, .frow .caret { border-width: 5px 4px 0; border-top-color: #777; }
.tree .t1 { padding-left: 16px; }
.tree .t2 { padding-left: 41px; }
.tree .t3 { padding-left: 75px; }
.t3 span { padding: 3px 5px; border-radius: 3px; background: #c3dbf5; white-space: nowrap; }
.attr { border-bottom: 0; border-right: 0; flex: 1; }
.sheet { height: 410px; overflow: hidden; display: flex; border-bottom: 1px solid #d3d3d5; border-right: 1px solid #d3d3d5; }
table { width: 326px; flex: none; height: 420px; border-collapse: collapse; table-layout: fixed; }
tr { height: 26px; }
th, td { padding: 0; font-weight: 400; border-right: 1px solid #d9d9d9; border-bottom: 1px solid #d9d9d9; white-space: nowrap; overflow: hidden; }
thead th { background: #fff; }
.no { width: 28px; }
.nm { width: 125px; }
thead .vl { background: #80bbfb; color: #fff; font-weight: 500; }
tbody th { background: #efefef; }
.name { padding-left: 3px; color: #1c5cff; }
.val { padding-left: 4px; }
.plain .name { color: #333; }
.cur th { background: #80bbfb; color: #fff; font-weight: 700; }
.cur .val { outline: 2px solid #777; outline-offset: -2px; }
.grade { margin: 0 2px; }
.attrthumb { height: 194px; margin-top: 18px; }
.foot { padding: 4px 7px; }
.foot button { width: 99px; height: 29px; border: 1px solid #ccc; border-radius: 4px; background: #fff; }

.split { width: 5px; flex: none; display: flex; align-items: flex-start; }
.grip { width: 5px; height: 125px; margin-top: 330px; background: #5d6773; display: flex; align-items: center; }
.grip::after { content: ""; border: 4px solid transparent; }
.grip.left::after { border-right-color: #b9bec4; border-left: 0; }
.grip.right::after { border-left-color: #b9bec4; border-right: 0; }

.view { flex: 1; min-width: 0; position: relative; background: #000; overflow: hidden; }
.scene { position: absolute; inset: 0; width: 100%; height: 100%; }
.control { position: absolute; left: 3px; top: 3px; width: 214px; height: 238px; padding: 14px; background: #e4e4e4; border: 1px solid #bbb; box-shadow: 0 0 12px #0004; }
.control h3 { margin: 0; height: 47px; font-size: 17px; font-weight: 400; line-height: 20px; color: #444; }
.opts { height: 160px; padding: 6px 13px; background: #fff; border: 1px solid #d0d0d0; border-radius: 3px; }
.opts label { height: 29px; display: flex; align-items: center; gap: 4px; white-space: nowrap; }
input[type="checkbox"] { appearance: none; flex: none; width: 17px; height: 17px; border: 1px solid #999; border-radius: 2px; background: #fff; display: grid; place-items: center; }
input[type="checkbox"]:checked { background: #2b7de1; border-color: #2b7de1; }
input[type="checkbox"]:checked::after { content: ""; width: 5px; height: 9px; margin-top: -3px; border: solid #fff; border-width: 0 2px 2px 0; transform: rotate(42deg); }
input[type="checkbox"]:disabled { background: #f0f0f0; border-color: #b9b9b9; }
input[type="checkbox"]:disabled::after { border-color: #aaa; }
.viewtools { position: absolute; right: 0; top: 1px; width: 41px; height: 306px; background: #fff; border-radius: 2px; display: flex; flex-direction: column; align-items: center; padding-top: 15px; gap: 10px; }
.viewtools .caret { border-width: 5px 4px 0; margin-bottom: -2px; }
.viewtools hr { width: 29px; margin: -1px 0 -3px; border: 0; border-top: 1px solid #555; }
.prompt { position: absolute; left: 0; right: 0; bottom: 0; height: 33px; background: #333333cc; color: #fff; display: flex; align-items: center; justify-content: center; gap: 4px; font-weight: 500; }

.disp { width: 259px; flex: none; position: relative; }
.dtabs { height: 33px; display: flex; align-items: flex-end; gap: 4px; padding-left: 3px; border-bottom: 1px solid #ccc; }
.dtabs button { width: 77px; height: 26px; background: #dcdcdc; border-radius: 4px 4px 0 0; color: #555; }
.dtabs .on { width: 74px; height: 29px; margin-bottom: -1px; background: #fff; border: 1px solid #c5ccd6; border-bottom: 0; color: #2d84ea; }
.radios { height: 36px; display: flex; align-items: center; gap: 8px; padding-left: 9px; color: #111; }
.radios label { display: flex; align-items: center; gap: 10px; }
.radios span { width: 48px; overflow: hidden; white-space: nowrap; }
input[type="radio"] { appearance: none; flex: none; width: 17px; height: 17px; border: 1px solid #888; border-radius: 50%; background: #fff; display: grid; place-items: center; }
input[type="radio"]:checked::after { content: ""; width: 9px; height: 9px; border-radius: 50%; background: #1f78e0; }
.ftree { flex: 1; border: 1px solid #cbced3; border-width: 1px 1px 1px 0; padding-top: 4px; color: #7a7a7a; }
.frow { height: 30px; display: flex; align-items: center; padding-left: 14px; gap: 10px; }
.frow label { display: flex; align-items: center; gap: 9px; }
.frow.kid { padding-left: 57px; }
.dfoot { height: 48px; display: flex; align-items: center; padding-left: 2px; }
.dfoot label { display: flex; align-items: center; gap: 4px; }
.float { position: absolute; right: 0; top: 431px; width: 49px; height: 49px; border-radius: 25px 0 0 25px; background: #f5f2ff; border: 4px solid #ddd5fd; border-right: 0; border-top-color: #ece8ff; }

.status { height: 39px; display: flex; align-items: center; background: #fcfcfc; }
.info { width: 565px; padding: 0 0 2px 2px; display: flex; white-space: nowrap; }
.info b { font-weight: 400; margin-left: 6px; }
.i1 { width: 113px; }
.i2 { width: 175px; }
.i3 { width: 138px; }
.info .i3 b, .info span:last-child b { margin-left: 0; }
.stools { display: flex; gap: 4px; }
.stools button { width: 31px; height: 31px; border: 1px solid #9a9a9a; border-radius: 3px; background: #fff; gap: 5px; }
.stools .wide { width: 45px; }
.stools .on { background: #d7e6fb; border-color: #3d8dea; }
.stools .apart { margin-left: 3px; }

.taskbar { height: 50px; background: #1a1f20; display: flex; align-items: center; color: #fff; white-space: nowrap; }
.start { width: 60px; height: 50px; }
.tsearch { width: 275px; height: 43px; background: #ebebeb; color: #111; display: flex; align-items: center; }
.tsearch input { flex: 1; min-width: 0; padding-left: 1px; }
.tsearch button { width: 70px; height: 43px; background: #2088ff; color: #fff; }
.apps { display: flex; margin-left: 5px; }
.apps button { width: 62px; height: 50px; position: relative; }
.apps .cur { background: #4a5152; }
.apps .run::after { content: ""; position: absolute; left: 6px; right: 5px; bottom: 0; height: 3px; background: #76b9ed; }
.apps .cur::after { left: 0; right: 0; }
.apps .stack::after { border-right: 10px solid #4d7ba0; }
.tray { margin-left: auto; display: flex; align-items: center; gap: 10px; padding-right: 32px; }
.weather { display: flex; align-items: center; gap: 10px; font-size: 18px; }
.sky { position: relative; width: 59px; }
.sky em { position: absolute; font-style: normal; font-size: 15px; }
.pct { left: 7px; top: -11px; }
.mem { left: -8px; top: 10px; }
.ime { font-size: 18px; margin-left: 1px; }
.tray time { text-align: center; margin: 0 15px 0 3px; }
</style>
